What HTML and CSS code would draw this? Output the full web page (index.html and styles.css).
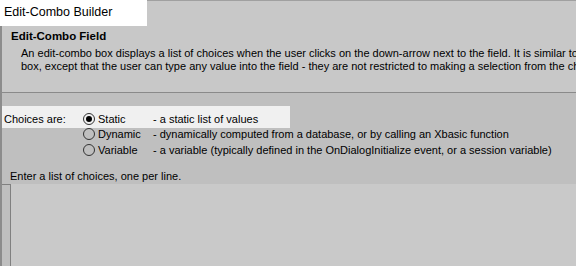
FILE: index.html
```html
<!DOCTYPE html>
<html>
<head>
<meta charset="utf-8">
<link rel="stylesheet" href="styles.css">
</head>
<body>
<div class="frame">
  <div class="tabbar">
    <div class="tab">Edit-Combo Builder</div>
    <div class="tabrest"></div>
  </div>
  <div class="panel">
    <div class="header">
      <div class="title">Edit-Combo Field</div>
      <div class="desc">An edit-combo box displays a list of choices when the user clicks on the down-arrow next to the field. It is similar to a combo</div>
      <div class="desc">box, except that the user can type any value into the field - they are not restricted to making a selection from the choices</div>
    </div>
    <div class="lower">
      <div class="choices">
        <div class="row selected">
          <span class="label">Choices are:</span>
          <span class="radio checked"></span>
          <span class="opt">Static</span>
          <span class="note">- a static list of values</span>
        </div>
        <div class="row">
          <span class="label"></span>
          <span class="radio"></span>
          <span class="opt">Dynamic</span>
          <span class="note">- dynamically computed from a database, or by calling an Xbasic function</span>
        </div>
        <div class="row">
          <span class="label"></span>
          <span class="radio"></span>
          <span class="opt">Variable</span>
          <span class="note">- a variable (typically defined in the OnDialogInitialize event, or a session variable)</span>
        </div>
      </div>
      <div class="enter">Enter a list of choices, one per line.</div>
      <div class="textarea"></div>
    </div>
  </div>
</div>
</body>
</html>
```
FILE: styles.css
```css
html, body {
  margin: 0;
  padding: 0;
}
body {
  width: 576px;
  height: 266px;
  overflow: hidden;
  background: #c8c8c8;
  font-family: "Liberation Sans", Arial, sans-serif;
  font-size: 11px;
  color: #000;
}
.frame {
  display: flex;
  flex-direction: column;
  height: 266px;
}
.tabbar {
  display: flex;
  height: 26px;
  flex: none;
}
.tab {
  width: 147px;
  background: #ffffff;
  font-size: 12.5px;
  padding: 5px 0 0 4px;
  box-sizing: border-box;
  white-space: nowrap;
}
.tabrest {
  flex: 1;
  border-top: 1px solid #a0a0a0;
}
.panel {
  flex: 1;
  display: flex;
  flex-direction: column;
  border-left: 2px solid #8c8c8c;
  overflow: hidden;
}
.header {
  height: 67px;
  flex: none;
  padding: 3px 0 0 9px;
  box-sizing: border-box;
  border-bottom: 1px solid #8a8a8a;
  white-space: nowrap;
  overflow: hidden;
}
.title {
  font-weight: bold;
  font-size: 11.5px;
  line-height: 15px;
  margin-bottom: 3px;
}
.desc {
  padding-left: 10px;
  line-height: 13px;
}
.lower {
  flex: 1;
  background: #bfbfbf;
  display: flex;
  flex-direction: column;
  padding-top: 13px;
}
.choices {
  display: flex;
  flex-direction: column;
}
.row {
  display: flex;
  align-items: center;
  height: 16px;
  white-space: nowrap;
}
.row.selected {
  background: #f0f0f0;
  width: 288px;
  height: 22px;
  margin-bottom: -2px;
  padding-top: 4px;
  box-sizing: border-box;
}
.label {
  width: 79px;
  padding-left: 2px;
  flex: none;
}
.radio {
  width: 12px;
  height: 12px;
  border: 1px solid #333;
  border-radius: 50%;
  box-sizing: border-box;
  background: transparent;
  position: relative;
  flex: none;
  margin-right: 3px;
}
.radio.checked::after {
  content: "";
  position: absolute;
  left: 2px;
  top: 2px;
  width: 6px;
  height: 6px;
  border-radius: 50%;
  background: #000;
}
.opt {
  width: 55px;
  flex: none;
}
.note {
  flex: none;
}
.enter {
  padding-left: 8px;
  margin-top: 11px;
  line-height: 14px;
  border-bottom: 1px solid #808080;
  padding-bottom: 1px;
}
.textarea {
  flex: 1;
  margin-left: 8px;
  margin-top: -1px;
  border-left: 1px solid #808080;
  background: #c9c9c9;
}
```
